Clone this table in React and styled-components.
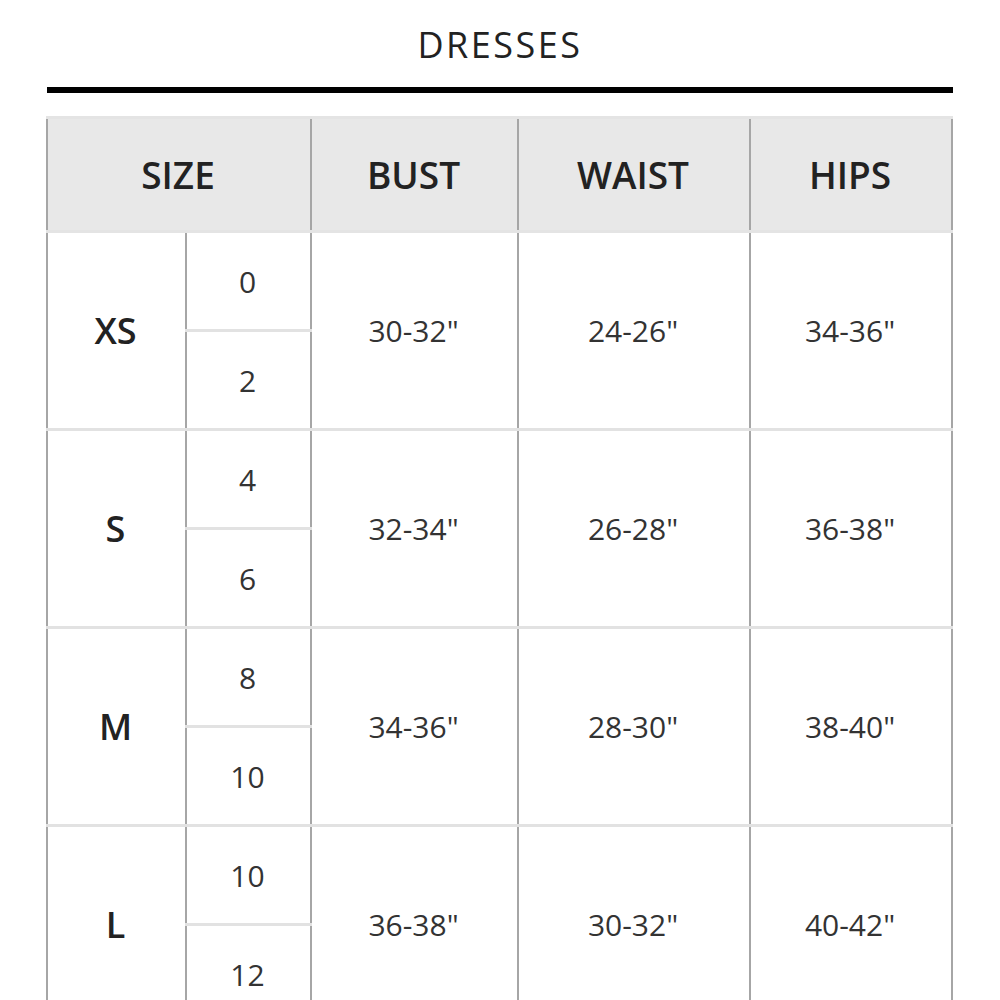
import React from 'react';
import styled, { createGlobalStyle } from 'styled-components';

const GlobalStyle = createGlobalStyle`
  body {
    margin: 0;
    background: #fff;
    font-family: "Open Sans", "Liberation Sans", sans-serif;
  }
`;

const sizes = [
  { label: 'XS', numbers: ['0', '2'], bust: '30-32"', waist: '24-26"', hips: '34-36"' },
  { label: 'S', numbers: ['4', '6'], bust: '32-34"', waist: '26-28"', hips: '36-38"' },
  { label: 'M', numbers: ['8', '10'], bust: '34-36"', waist: '28-30"', hips: '38-40"' },
  { label: 'L', numbers: ['10', '12'], bust: '36-38"', waist: '30-32"', hips: '40-42"' },
];

const SizeChart = () => {
  return (
    <Page>
      <GlobalStyle />
      <Title>DRESSES</Title>
      <Rule />
      <Table>
        <colgroup>
          <col style={{ width: 139 }} />
          <col style={{ width: 125 }} />
          <col style={{ width: 207 }} />
          <col style={{ width: 232 }} />
          <col style={{ width: 202 }} />
        </colgroup>
        <thead>
          <HeadRow>
            <HeadCell colSpan={2}>SIZE</HeadCell>
            <HeadCell>BUST</HeadCell>
            <HeadCell>WAIST</HeadCell>
            <HeadCell>HIPS</HeadCell>
          </HeadRow>
        </thead>
        <tbody>
          {sizes.map((s) => (
            <React.Fragment key={s.label}>
              <Row>
                <Cell rowSpan={2} $bold>{s.label}</Cell>
                <Cell>{s.numbers[0]}</Cell>
                <Cell rowSpan={2}>{s.bust}</Cell>
                <Cell rowSpan={2}>{s.waist}</Cell>
                <Cell rowSpan={2}>{s.hips}</Cell>
              </Row>
              <Row>
                <Cell>{s.numbers[1]}</Cell>
              </Row>
            </React.Fragment>
          ))}
        </tbody>
      </Table>
    </Page>
  );
};

const Page = styled.div`
  padding: 0 47px;
  display: flex;
  flex-direction: column;
`;

const Title = styled.h1`
  margin: 0;
  height: 87px;
  display: flex;
  align-items: center;
  justify-content: center;
  font-size: 36px;
  font-weight: 400;
  letter-spacing: 2.5px;
  color: #222;
  padding-top: 1px;
  box-sizing: border-box;
`;

const Rule = styled.div`
  height: 6px;
  background: #000;
  margin-bottom: 23px;
`;

const Table = styled.table`
  width: 906px;
  table-layout: fixed;
  border-collapse: collapse;
  margin-left: -1px;
  color: #2b2b2b;
`;

const HeadRow = styled.tr`
  height: 114px;
  background: #e8e8e8;
`;

const HeadCell = styled.th`
  font-size: 37px;
  font-weight: 600;
  color: #222;
  text-align: center;
  vertical-align: middle;
  border-left: 2px solid #a6a6a6;
  border-right: 2px solid #a6a6a6;
  border-top: 3px solid #e4e4e4;
  border-bottom: 3px solid #e4e4e4;
  padding: 0 2px 0 0;
`;

const Row = styled.tr`
  height: 99px;
`;

const Cell = styled.td`
  font-size: ${(p) => (p.$bold ? '36px' : '30px')};
  font-weight: ${(p) => (p.$bold ? 600 : 400)};
  color: ${(p) => (p.$bold ? '#222' : '#333')};
  text-align: center;
  vertical-align: middle;
  border-left: 2px solid #a6a6a6;
  border-right: 2px solid #a6a6a6;
  border-top: 3px solid #e2e2e2;
  border-bottom: 3px solid #e2e2e2;
  padding: 0 2px 0 0;
`;

export default SizeChart;
